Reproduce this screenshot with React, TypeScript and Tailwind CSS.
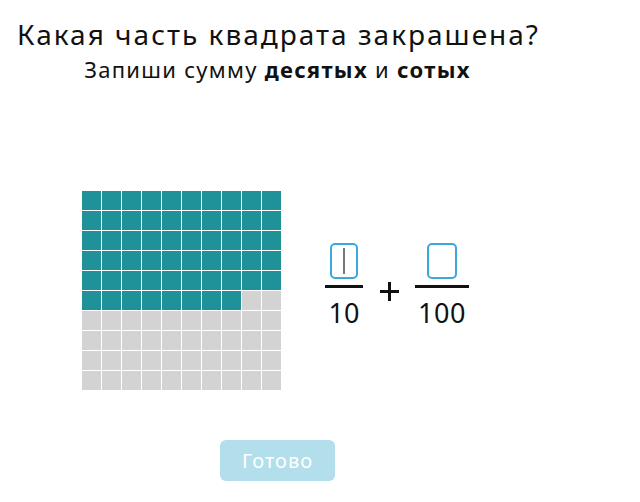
import React from "react";

const cells = Array.from({ length: 100 }, (_, i) => i < 58);

export default function App() {
  return (
    <div
      className="w-[640px] h-[502px] bg-white text-[#111] overflow-hidden"
      style={{ fontFamily: '"Noto Sans", "Open Sans", sans-serif' }}
    >
      <div className="w-[555px] flex flex-col items-center">
        <h1 className="mt-[14px] text-[28px] leading-[40px] font-normal tracking-[2px] pl-[2px]">
          Какая часть квадрата закрашена?
        </h1>
        <p className="mt-[0px] text-[22px] leading-[30px] tracking-[1.3px]">
          Запиши сумму <b className="font-bold">десятых</b> и <b className="font-bold">сотых</b>
        </p>
      </div>

      <div className="flex items-start mt-[107px] pl-[82px]">
        <div className="grid grid-cols-[repeat(10,19px)] grid-rows-[repeat(10,19px)] gap-px">
          {cells.map((t, i) => (
            <div key={i} className={t ? "bg-[#1f9199]" : "bg-[#d3d3d3]"} />
          ))}
        </div>

        <div className="flex items-start ml-[44px] mt-[52px]">
          <div className="flex flex-col items-center w-[38px]">
            <div className="w-[28px] h-[36px] border-2 border-[#3ba8dc] rounded-[5px] flex items-center justify-center">
              <div className="w-[2px] h-[26px] bg-[#777]" />
            </div>
            <div className="w-[38px] h-[3px] bg-[#111] mt-[6px]" />
            <div className="text-[27px] leading-[34px] mt-[8px]">10</div>
          </div>
          <div className="relative w-[19px] h-[19px] ml-[17px] mt-[39px]">
            <div className="absolute left-0 right-0 top-[8px] h-[3px] bg-[#111]" />
            <div className="absolute top-0 bottom-0 left-[8px] w-[3px] bg-[#111]" />
          </div>
          <div className="flex flex-col items-center w-[54px] ml-[16px]">
            <div className="w-[30px] h-[36px] border-2 border-[#3ba8dc] rounded-[5px]" />
            <div className="w-[54px] h-[3px] bg-[#111] mt-[6px]" />
            <div className="text-[27px] leading-[34px] mt-[8px] tracking-[0.5px]">100</div>
          </div>
        </div>
      </div>

      <div className="w-[555px] flex justify-center mt-[50px]">
        <button className="w-[115px] h-[41px] rounded-[6px] bg-[#b3dfec] text-white text-[20px] leading-[41px] tracking-[1px]">
          Готово
        </button>
      </div>
    </div>
  );
}
